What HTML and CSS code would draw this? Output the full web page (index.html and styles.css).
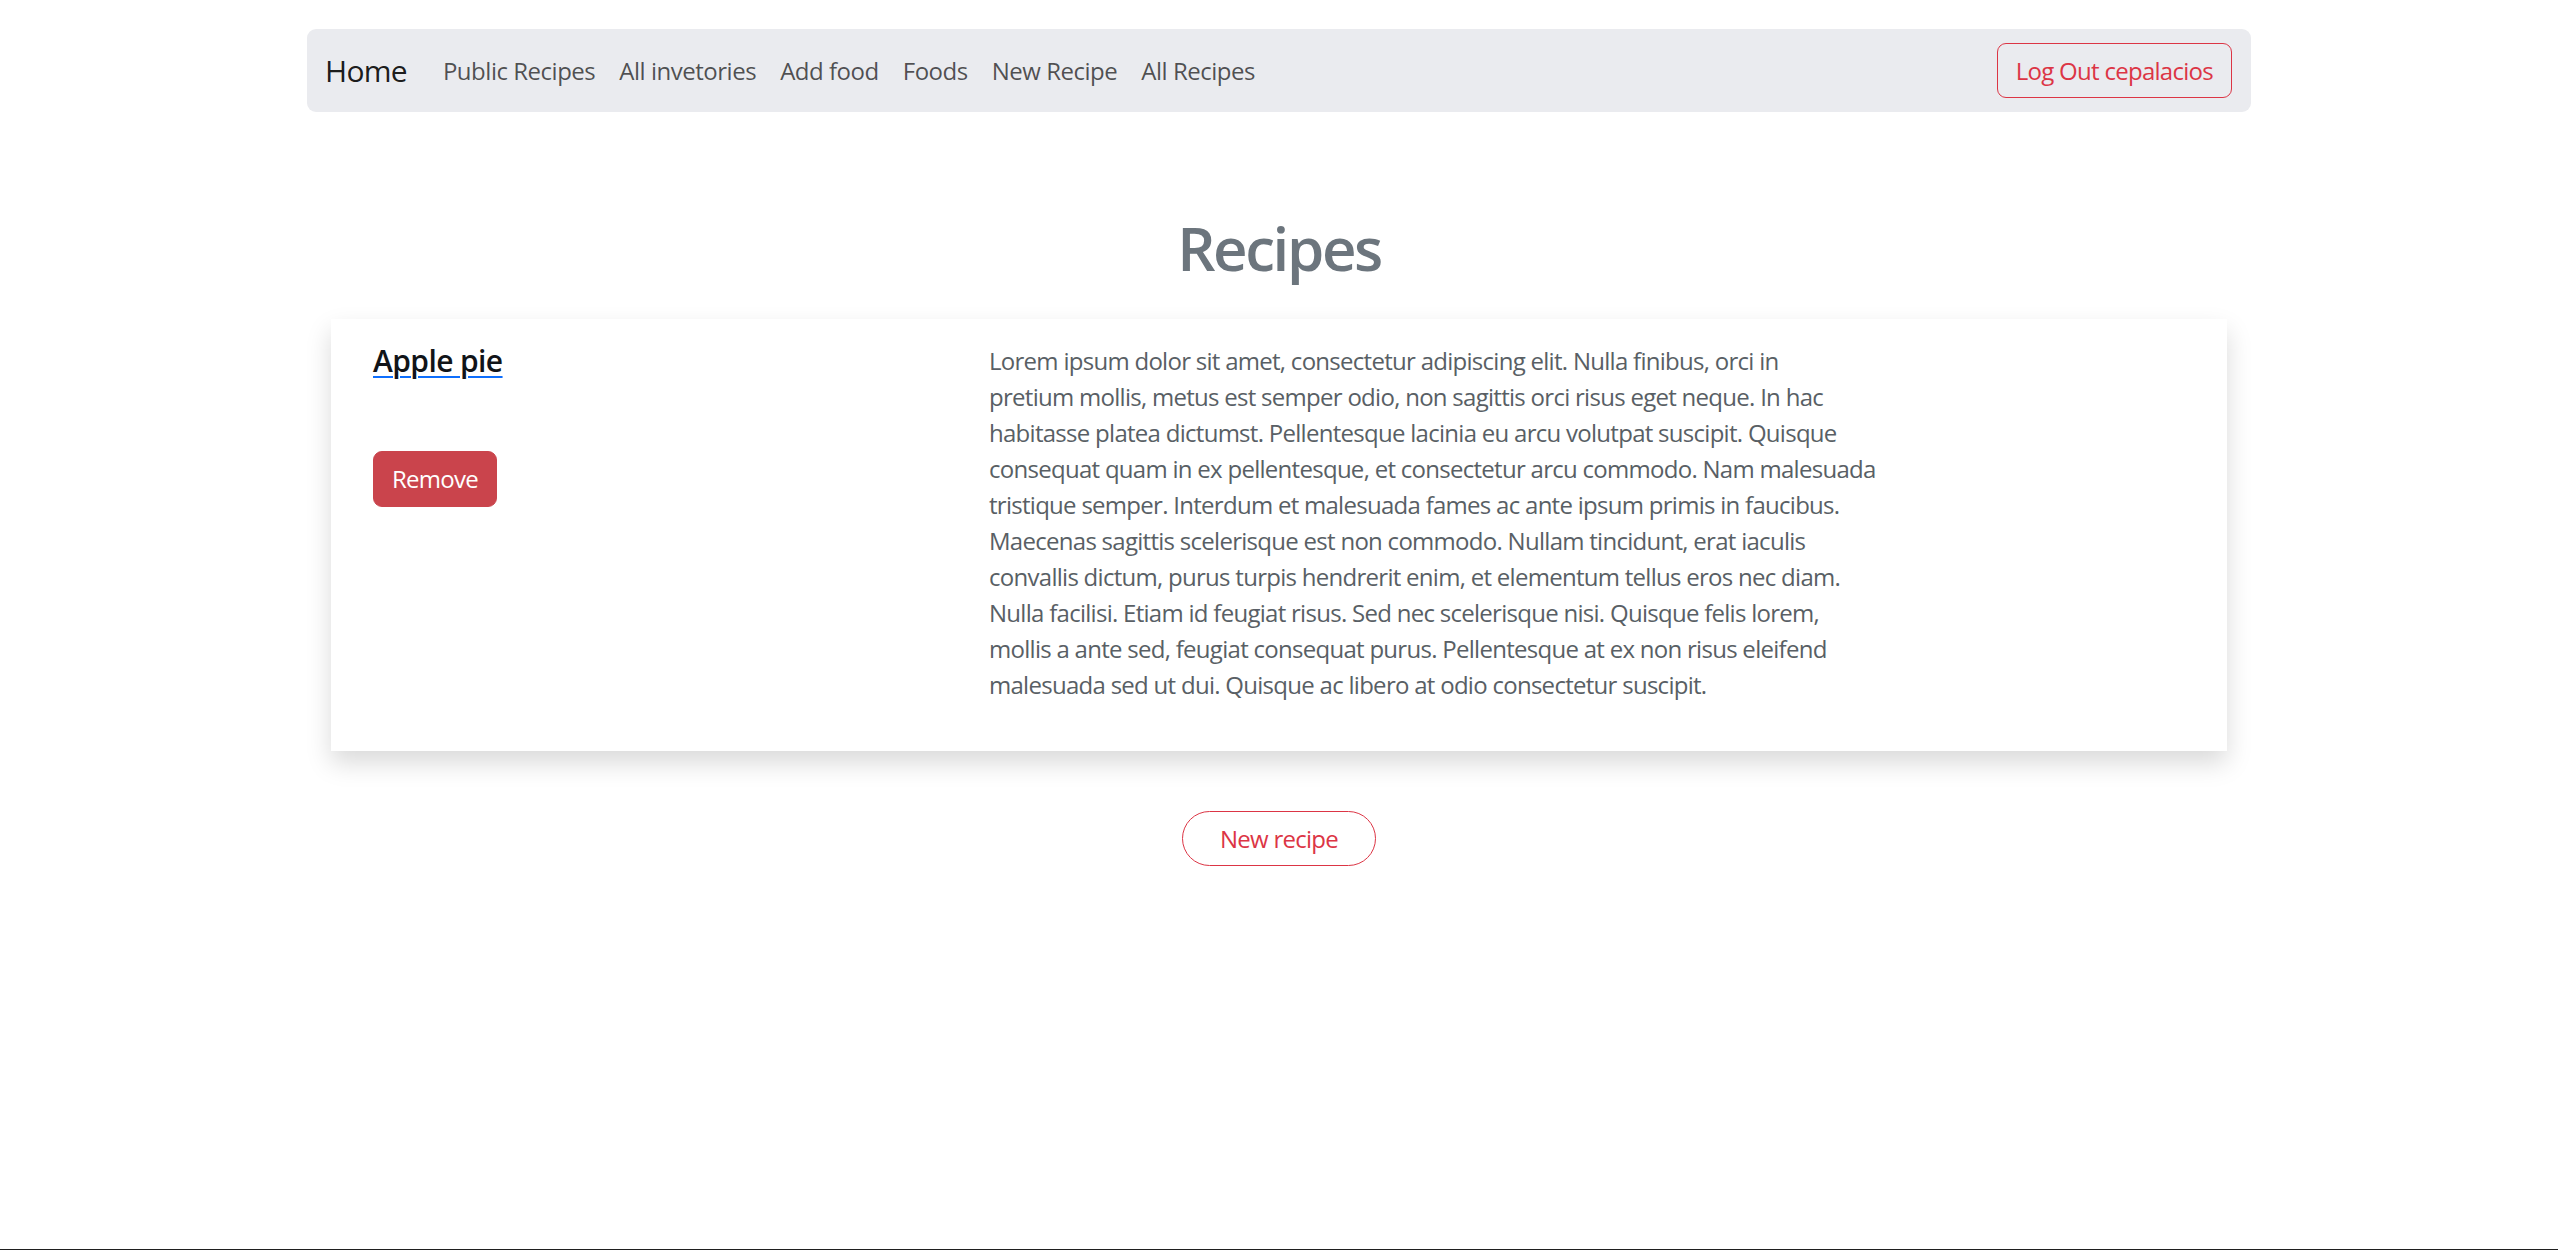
FILE: index.html
```html
<!DOCTYPE html>
<html lang="en">
<head>
<meta charset="utf-8">
<title>Recipes</title>
<link rel="stylesheet" href="styles.css">
</head>
<body>
<div class="page">
  <nav class="navbar">
    <a class="brand" href="#">Home</a>
    <a class="nav-link" href="#">Public Recipes</a>
    <a class="nav-link" href="#">All invetories</a>
    <a class="nav-link" href="#">Add food</a>
    <a class="nav-link" href="#">Foods</a>
    <a class="nav-link" href="#">New Recipe</a>
    <a class="nav-link" href="#">All Recipes</a>
    <a class="btn-logout" href="#">Log Out cepalacios</a>
  </nav>

  <h1 class="page-title">Recipes</h1>

  <div class="card">
    <div class="card-left">
      <a class="title-link" href="#"><h5 class="title">Apple pie</h5></a>
      <button class="btn-remove" type="button">Remove</button>
    </div>
    <div class="card-right">
      <p class="desc">Lorem ipsum dolor sit amet, consectetur adipiscing elit. Nulla finibus, orci in<br>pretium mollis, metus est semper odio, non sagittis orci risus eget neque. In hac<br>habitasse platea dictumst. Pellentesque lacinia eu arcu volutpat suscipit. Quisque<br>consequat quam in ex pellentesque, et consectetur arcu commodo. Nam malesuada<br>tristique semper. Interdum et malesuada fames ac ante ipsum primis in faucibus.<br>Maecenas sagittis scelerisque est non commodo. Nullam tincidunt, erat iaculis<br>convallis dictum, purus turpis hendrerit enim, et elementum tellus eros nec diam.<br>Nulla facilisi. Etiam id feugiat risus. Sed nec scelerisque nisi. Quisque felis lorem,<br>mollis a ante sed, feugiat consequat purus. Pellentesque at ex non risus eleifend<br>malesuada sed ut dui. Quisque ac libero at odio consectetur suscipit.</p>
    </div>
  </div>

  <div class="actions">
    <a class="btn-new" href="#">New recipe</a>
  </div>
</div>
</body>
</html>
```

FILE: styles.css
```css
* { box-sizing: border-box; }

html, body {
  margin: 0;
  padding: 0;
}

body {
  font-family: "Open Sans", "Noto Sans", sans-serif;
  font-size: 24px;
  line-height: 1.5;
  letter-spacing: -0.03em;
  color: #212529;
  background: #ffffff;
}

.page {
  min-height: 100vh;
  border-bottom: 1px solid #1f1f1f;
  overflow: hidden;
}

.navbar {
  width: 1944px;
  height: 83px;
  margin: 29px auto 0;
  padding: 0 19px 0 18px;
  background: #eaebef;
  border-radius: 9px;
  display: flex;
  align-items: center;
}

.brand {
  font-size: 30px;
  line-height: 45px;
  color: rgba(0, 0, 0, 0.9);
  text-decoration: none;
  margin-right: 24px;
}

.nav-link {
  padding: 0 12px;
  color: rgba(0, 0, 0, 0.68);
  text-decoration: none;
  line-height: 36px;
  letter-spacing: -0.02em;
}

.btn-logout {
  margin-left: auto;
  height: 55px;
  padding: 0 18px;
  display: flex;
  align-items: center;
  border: 1px solid #dc3545;
  border-radius: 9px;
  color: #dc3545;
  text-decoration: none;
}

.page-title {
  margin: 100px 0 35px;
  text-align: center;
  font-size: 60px;
  line-height: 72px;
  font-weight: 600;
  letter-spacing: -0.04em;
  color: #6c757d;
}

.card {
  width: 1896px;
  margin: 0 auto;
  padding: 24px 42px;
  background: #ffffff;
  box-shadow: 0 12px 24px rgba(0, 0, 0, 0.15);
  display: grid;
  grid-template-columns: 616px 906px;
}

.card-left {
  display: flex;
  flex-direction: column;
  align-items: flex-start;
}

.title-link {
  color: #0d6efd;
  text-decoration: underline;
  text-decoration-thickness: 2px;
  text-underline-offset: 4px;
}

.title {
  margin: 0;
  font-size: 30px;
  line-height: 36px;
  font-weight: 600;
  letter-spacing: -0.02em;
  color: #111418;
}

.btn-remove {
  margin-top: 72px;
  height: 56px;
  padding: 0 18px;
  font-family: inherit;
  font-size: 24px;
  line-height: 36px;
  letter-spacing: -0.03em;
  color: #ffffff;
  background: #ca444c;
  border: 1px solid #ca444c;
  border-radius: 9px;
}

.desc {
  margin: 0 0 24px;
  color: #595f65;
  white-space: nowrap;
}

.actions {
  display: flex;
  justify-content: center;
  margin-top: 60px;
}

.btn-new {
  height: 55px;
  padding: 0 37px;
  display: flex;
  align-items: center;
  border: 1px solid #dc3545;
  border-radius: 999px;
  color: #dc3545;
  text-decoration: none;
}
```
